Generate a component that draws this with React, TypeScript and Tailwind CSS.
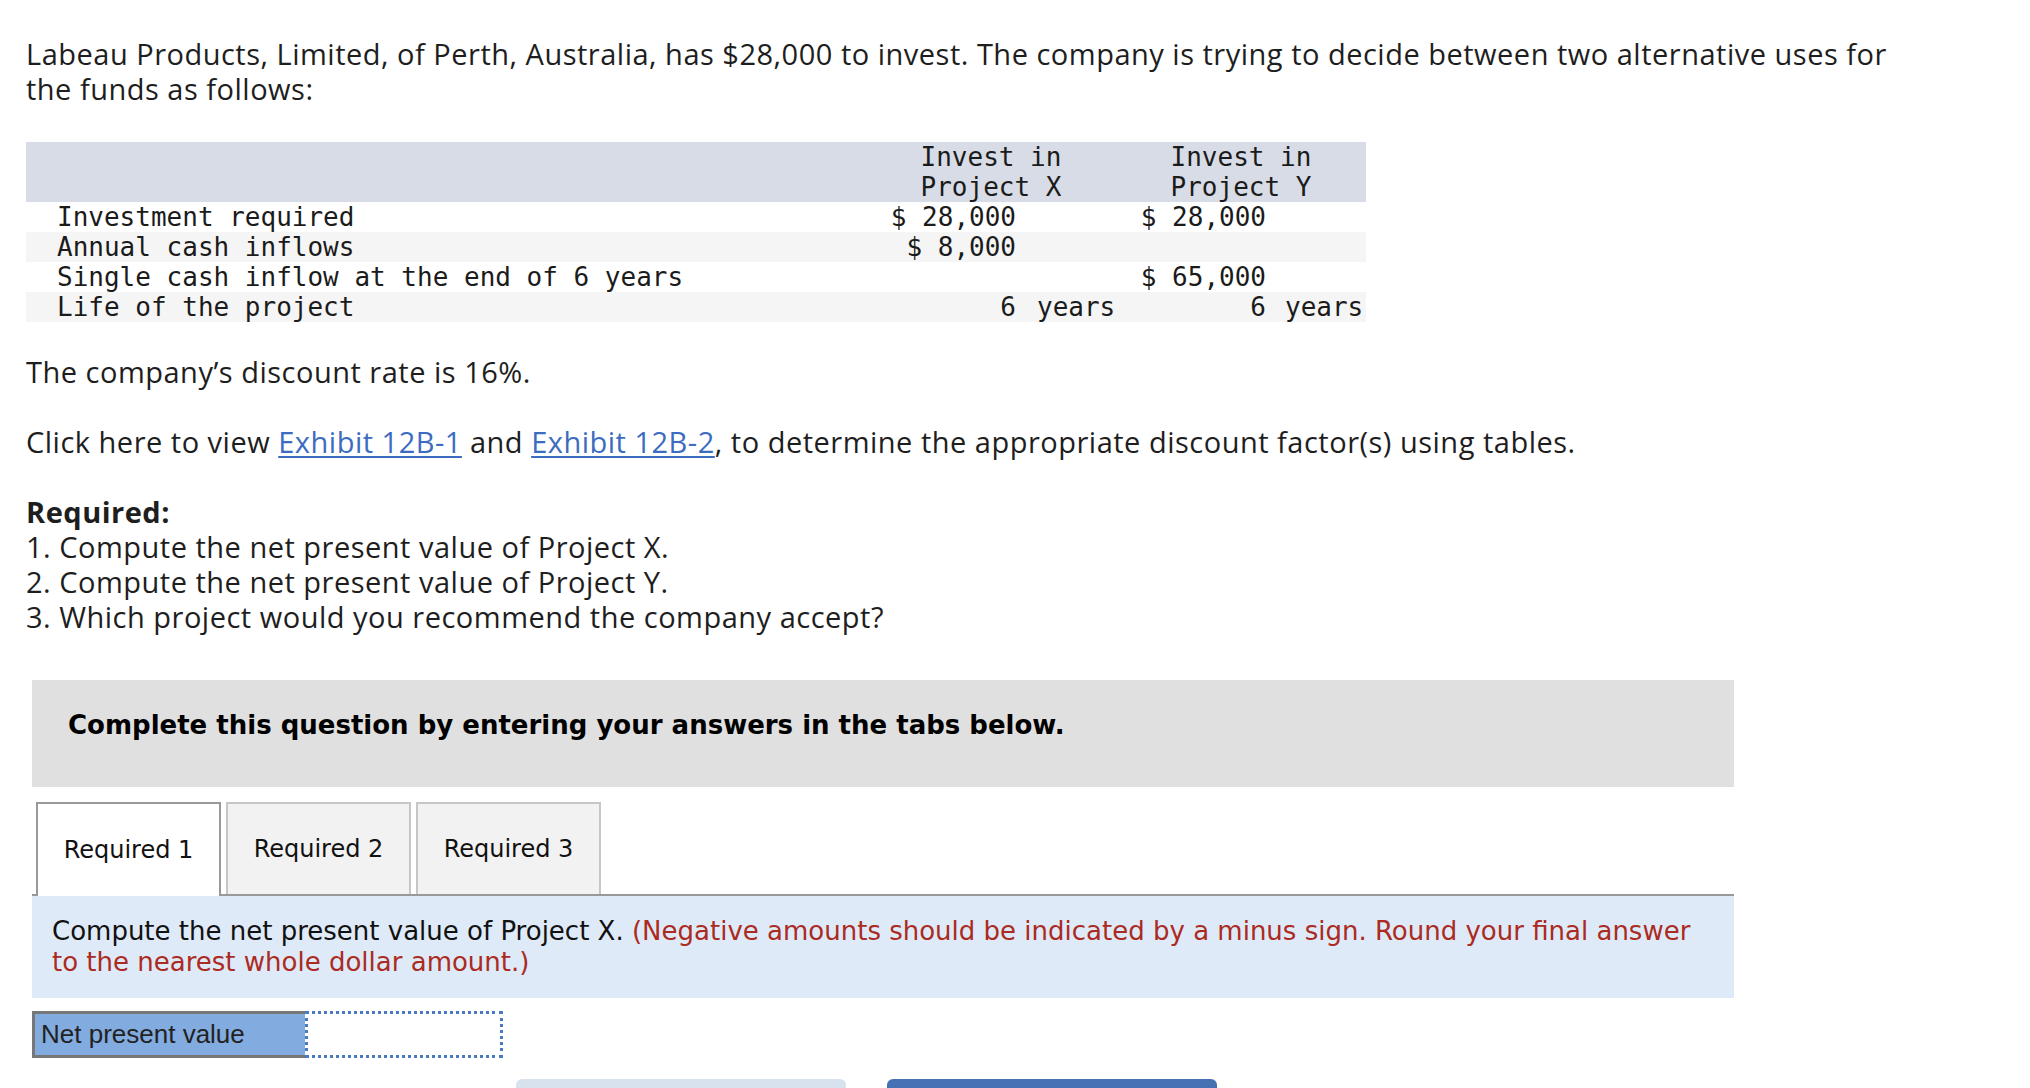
import React from 'react';

const body = { fontFamily: '"Open Sans", Lato, sans-serif' };
const mono = { fontFamily: '"DejaVu Sans Mono", "Liberation Mono", monospace' };
const verdana = { fontFamily: '"DejaVu Sans", Verdana, sans-serif' };

type Row = { label: string; x?: string; xUnit?: string; y?: string; yUnit?: string };

const rows: Row[] = [
  { label: 'Investment required', x: '$ 28,000', y: '$ 28,000' },
  { label: 'Annual cash inflows', x: '$ 8,000' },
  { label: 'Single cash inflow at the end of 6 years', y: '$ 65,000' },
  { label: 'Life of the project', x: '6', xUnit: 'years', y: '6', yUnit: 'years' },
];

function DataTable() {
  return (
    <div className="mt-[36px] w-[1340px] text-[26px] leading-[30px] text-[#1b1b1b] whitespace-pre" style={mono}>
      <div className="flex bg-[#d8dce6] h-[60px]">
        <div className="w-[840px]" />
        <div className="w-[250px] flex justify-center">
          <div>Invest in<br />Project X</div>
        </div>
        <div className="w-[250px] flex justify-center">
          <div>Invest in<br />Project Y</div>
        </div>
      </div>
      {rows.map((r, i) => (
        <div key={i} className={`flex h-[30px] ${i % 2 === 1 ? 'bg-[#f5f5f5]' : 'bg-white'}`}>
          <div className="w-[840px] pl-[31px]">{r.label}</div>
          <div className="w-[150px] text-right">{r.x}</div>
          <div className="w-[100px] pl-[21px]">{r.xUnit}</div>
          <div className="w-[150px] text-right">{r.y}</div>
          <div className="w-[100px] pl-[19px]">{r.yUnit}</div>
        </div>
      ))}
    </div>
  );
}

function Tabs() {
  return (
    <div className="mt-[15px] ml-[6px] w-[1702px] flex gap-[5px] pl-[4px] border-b-2 border-[#999]" style={verdana}>
      <div className="w-[185px] h-[94px] -mb-[2px] bg-white border-2 border-b-0 border-[#999] flex items-center justify-center text-[24px] text-[#111]">
        Required 1
      </div>
      <div className="w-[185px] h-[92px] bg-[#f2f2f2] border-2 border-b-0 border-[#c6c6c6] flex items-center justify-center text-[24px] text-[#111]">
        Required 2
      </div>
      <div className="w-[185px] h-[92px] bg-[#f2f2f2] border-2 border-b-0 border-[#c6c6c6] flex items-center justify-center text-[24px] text-[#111]">
        Required 3
      </div>
    </div>
  );
}

export default function App() {
  return (
    <div className="bg-white min-h-screen w-[2030px] pl-[26px] pt-[36px] text-[#1e1e1e]">
      <p className="text-[29px] leading-[35px] tracking-[0.5px]" style={body}>
        Labeau Products, Limited, of Perth, Australia, has $28,000 to invest. The company is trying to decide between two alternative uses for
        <br />
        the funds as follows:
      </p>

      <DataTable />

      <p className="mt-[32px] text-[29px] leading-[35px] tracking-[0.5px]" style={body}>
        The company’s discount rate is 16%.
      </p>

      <p className="mt-[35px] text-[29px] leading-[35px] tracking-[0.5px]" style={body}>
        Click here to view{' '}
        <a className="text-[#3b6cc0] underline underline-offset-[3px]">Exhibit 12B-1</a> and{' '}
        <a className="text-[#3b6cc0] underline underline-offset-[3px]">Exhibit 12B-2</a>, to determine the appropriate discount factor(s) using tables.
      </p>

      <div className="mt-[35px] text-[29px] leading-[35px] tracking-[0.5px]" style={body}>
        <p className="font-bold">Required:</p>
        <p>1. Compute the net present value of Project X.</p>
        <p>2. Compute the net present value of Project Y.</p>
        <p>3. Which project would you recommend the company accept?</p>
      </div>

      <div className="mt-[46px] ml-[6px] w-[1702px] h-[107px] bg-[#e0e0e0] pl-[36px] pt-[29px]">
        <p className="text-[26px] leading-[32px] font-bold text-black" style={verdana}>
          Complete this question by entering your answers in the tabs below.
        </p>
      </div>

      <Tabs />

      <div className="ml-[6px] w-[1702px] bg-[#deeaf7] px-[20px] pt-[20px] pb-[20px] text-[26px] leading-[31px]" style={verdana}>
        <span className="text-[#111]">Compute the net present value of Project X. </span>
        <span className="text-[#ab2a22]">
          (Negative amounts should be indicated by a minus sign. Round your final answer to the nearest whole dollar amount.)
        </span>
      </div>

      <div className="mt-[13px] ml-[6px] flex h-[47px]">
        <div className="w-[273px] bg-[#82abe0] border-[3px] border-r-0 border-[#777] pl-[6px] flex items-center text-[26px] text-[#222]" style={{ fontFamily: '"Liberation Sans", Arial, sans-serif' }}>
          Net present value
        </div>
        <div className="w-[198px] bg-white border-[3px] border-dotted border-[#4a7bc2]" />
      </div>

      <div className="mt-[21px] flex pl-[490px] gap-[41px]">
        <div className="w-[330px] h-[50px] rounded-t-[6px] bg-[#d8e2ef]" />
        <div className="w-[330px] h-[50px] rounded-t-[6px] bg-[#4672b3]" />
      </div>
    </div>
  );
}
